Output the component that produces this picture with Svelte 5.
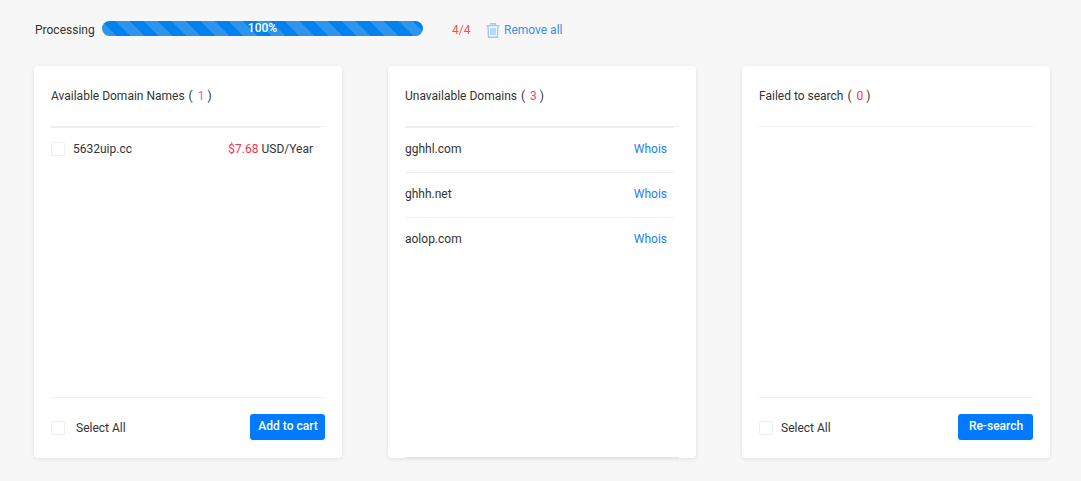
<script>
  const unavailable = ['gghhl.com', 'ghhh.net', 'aolop.com'];
</script>

<div class="page">
  <div class="progress-row">
    <span class="label">Processing</span>
    <div class="bar"><div class="stripes"></div><span class="pct">100%</span></div>
    <span class="count">4/4</span>
    <span class="remove">
      <svg width="14" height="15" viewBox="0 0 14 15" fill="none" stroke="#9ccbfa" stroke-width="1.4">
        <path d="M0.5 2.6h13M4.8 2.6V.8h4.4v1.8M2 2.6l.5 11.6h9l.5-11.6M5 5v7M7 5v7M9 5v7" />
      </svg>
      Remove all
    </span>
  </div>
  <div class="cards">
    <section class="card">
      <h3>Available Domain Names<span class="paren">( <b class="pink">1</b> )</span></h3>
      <div class="rule"></div>
      <div class="body list">
        <div class="avail"><i class="check"></i><span class="name">5632uip.cc</span><span class="price"><em>$7.68</em> USD/Year</span></div>
      </div>
      <div class="foot">
        <label class="wide"><i class="check"></i><span>Select All</span></label>
        <button>Add to cart</button>
      </div>
    </section>
    <section class="card">
      <h3>Unavailable Domains<span class="paren">( <b class="rose">3</b> )</span></h3>
      <div class="rule"></div>
      <div class="body list">
        {#each unavailable as d}
          <div class="row"><span>{d}</span><a>Whois</a></div>
        {/each}
      </div>
      <div class="edge"></div>
    </section>
    <section class="card">
      <h3>Failed to search<span class="paren">( <b class="red">0</b> )</span></h3>
      <div class="rule"></div>
      <div class="body"></div>
      <div class="foot">
        <label><i class="check"></i><span>Select All</span></label>
        <button>Re-search</button>
      </div>
    </section>
  </div>
</div>

<style>
  :global(body) { margin: 0; background: #f7f7f7; }
  .page { width: 1081px; height: 481px; box-sizing: border-box; padding: 21px 0 0 34px; font: 12px Roboto, sans-serif; color: #333; overflow: hidden; }
  .progress-row { display: flex; align-items: flex-start; height: 15px; line-height: 17px; }
  .label, .count { padding-top: 1px; }
  .label { width: 67px; margin-left: 1px; }
  .bar { position: relative; width: 321px; height: 15px; border-radius: 8px; background: #0581eb; overflow: hidden; text-align: center; }
  .stripes { position: absolute; inset: 0; background: repeating-linear-gradient(45deg, rgba(255,255,255,.16) 0 10px, transparent 10px 20px); }
  .pct { position: relative; display: block; color: #fff; font-size: 12px; font-weight: 500; line-height: 15px; }
  .count { margin-left: 29px; width: 34px; color: #f2504f; }
  .remove { display: flex; align-items: center; gap: 4px; color: #3b8fdc; height: 19px; }
  .cards { display: flex; gap: 46px; margin-top: 30px; }
  .card { position: relative; flex: none; width: 308px; height: 392px; box-sizing: border-box; background: #fff; border-radius: 4px; box-shadow: 0 1px 4px rgba(0,0,0,.1); padding: 0 17px; display: flex; flex-direction: column; }
  h3 { margin: 0; height: 60px; line-height: 60px; font-size: 12px; font-weight: 400; }
  .paren { margin-left: 4px; }
  b { font-weight: 400; margin-left: 2px; }
  .pink { color: #f4608f; }
  .rose { color: #f4476a; }
  .red { color: #f33; }
  .rule { height: 1px; background: #eee; flex: none; }
  .body { flex: 1; }
  .list { margin-top: -1px; width: 269px; border-top: 2px solid #eee; }
  .avail { display: flex; align-items: center; height: 42px; }
  .check { display: block; width: 12px; height: 12px; border: 1px solid #eee; border-radius: 2px; background: #fff; flex: none; }
  .name { margin-left: 8px; flex: 1; }
  .price { margin-right: 7px; }
  em { font-style: normal; color: #f0344a; }
  .row { display: flex; justify-content: space-between; align-items: center; height: 42px; padding-bottom: 2px; border-bottom: 1px solid #eee; }
  .row:last-child { border-bottom: none; }
  .row a { color: #1a7fef; margin-right: 7px; }
  .edge { position: absolute; left: 17px; right: 17px; bottom: 0; height: 1px; background: #e6e6e6; }
  .foot { height: 61px; box-sizing: border-box; padding-bottom: 2px; border-top: 1px solid #eee; display: flex; justify-content: space-between; align-items: center; flex: none; }
  label { display: flex; align-items: center; gap: 8px; margin-top: 2px; }
  label.wide { gap: 11px; }
  button { width: 75px; height: 26px; border: none; border-radius: 3px; background: #007bff; color: #fff; font: 500 12px Roboto, sans-serif; padding: 0 0 2px 1px; }
</style>
